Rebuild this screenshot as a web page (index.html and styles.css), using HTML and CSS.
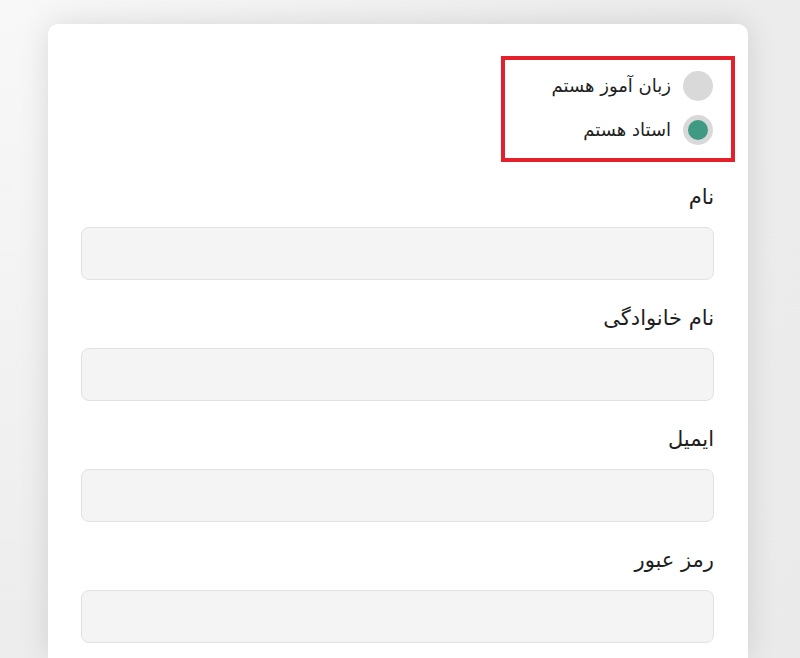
FILE: index.html
```html
<!DOCTYPE html>
<html lang="fa" dir="rtl">
<head>
    <meta charset="UTF-8">
    <meta name="viewport" content="width=device-width, initial-scale=1.0">
    <title>ثبت نام</title>
    <link rel="stylesheet" href="styles.css">
</head>
<body>
    <div class="card">
        <div class="role-group">
            <label class="role">
                <input type="radio" name="role" value="student">
                <span class="dot"></span>
                <span class="role-text">زبان آموز هستم</span>
            </label>
            <label class="role">
                <input type="radio" name="role" value="teacher" checked>
                <span class="dot"></span>
                <span class="role-text">استاد هستم</span>
            </label>
        </div>

        <div class="field">
            <label for="firstName">نام</label>
            <input type="text" id="firstName">
        </div>
        <div class="field">
            <label for="lastName">نام خانوادگی</label>
            <input type="text" id="lastName">
        </div>
        <div class="field">
            <label for="email">ایمیل</label>
            <input type="email" id="email">
        </div>
        <div class="field">
            <label for="password">رمز عبور</label>
            <input type="password" id="password">
        </div>
    </div>
</body>
</html>
```

FILE: styles.css
```css
body {
    margin: 0;
    height: 658px;
    overflow: hidden;
    font-family: "DejaVu Sans", sans-serif;
    color: #1e1e1e;
    background: radial-gradient(circle at 0 0, #f8f8f8 0, #ededed 60%, #eaeaea 100%);
}

.card {
    box-sizing: border-box;
    width: 700px;
    margin: 24px 52px 0 0;
    padding: 32px 34px 15px 33px;
    background: #fff;
    border-radius: 10px 10px 0 0;
    box-shadow: 0 0 30px rgba(0, 0, 0, 0.12);
}

.role-group {
    box-sizing: border-box;
    width: 234px;
    margin-right: -21px;
    padding: 11px 18px 13px 10px;
    border: 4px solid #e3202b;
    display: flex;
    flex-direction: column;
    gap: 14px;
}

.role {
    display: flex;
    align-items: center;
    gap: 12px;
    height: 30px;
    cursor: pointer;
}

.role input {
    display: none;
}

.dot {
    box-sizing: border-box;
    width: 30px;
    height: 30px;
    border-radius: 50%;
    background: #d9d9d9;
    flex-shrink: 0;
}

.role input:checked + .dot {
    border: 5px solid #d9d9d9;
    background: #409a83;
}

.role-text {
    font-size: 18px;
    line-height: 30px;
}

.field {
    margin-top: 21px;
}

.field + .field {
    margin-top: 24px;
}

.field label {
    display: block;
    font-size: 21px;
    line-height: 28px;
    margin-bottom: 16px;
}

.field input {
    box-sizing: border-box;
    display: block;
    width: 100%;
    height: 53px;
    background: #f4f4f4;
    border: 1px solid #e1e1e1;
    border-radius: 8px;
    font-family: inherit;
    font-size: 16px;
    padding: 0 14px;
}
```
